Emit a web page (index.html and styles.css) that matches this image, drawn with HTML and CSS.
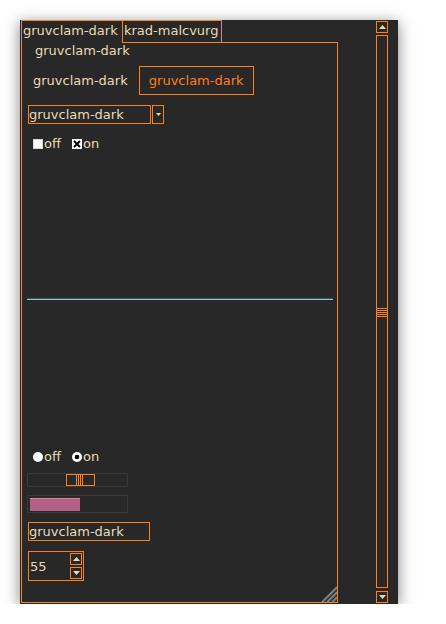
FILE: index.html
```html
<!DOCTYPE html>
<html>
<head>
<meta charset="utf-8">
<link rel="stylesheet" href="styles.css">
</head>
<body>
<div class="page">
  <div class="window">
    <div class="notebook">
      <div class="tabs">
        <div class="tab tab-active">gruvclam-dark</div>
        <div class="tab tab-inactive">krad-malcvurg</div>
        <div class="tab-fill"></div>
      </div>
      <div class="panel">
        <div class="label1">gruvclam-dark</div>
        <div class="row2">
          <span class="lbl">gruvclam-dark</span>
          <div class="btn">gruvclam-dark</div>
        </div>
        <div class="combo">
          <div class="combo-entry">gruvclam-dark</div>
          <div class="combo-btn"><svg width="5" height="3" viewBox="0 0 5 3"><polygon points="0,0 5,0 2.5,3" fill="#ebdbb2"/></svg></div>
        </div>
        <div class="choices">
          <div class="choice"><span class="box"></span><span class="ctext">off</span></div>
          <div class="choice"><svg class="mark" width="10" height="10" viewBox="0 0 10 10"><rect width="10" height="10" fill="#fff"/><path d="M2 2 L8 8 M8 2 L2 8" stroke="#000" stroke-width="2"/></svg><span class="ctext">on</span></div>
        </div>
        <div class="sep"></div>
        <div class="choices radios">
          <div class="choice"><svg class="mark" width="10" height="10" viewBox="0 0 10 10"><circle cx="5" cy="5" r="5" fill="#fff"/></svg><span class="ctext">off</span></div>
          <div class="choice"><svg class="mark" width="10" height="10" viewBox="0 0 10 10"><circle cx="5" cy="5" r="5" fill="#fff"/><circle cx="5" cy="5" r="2.3" fill="#000"/></svg><span class="ctext">on</span></div>
        </div>
        <div class="scale">
          <div class="scale-slider"><div class="scale-grip"></div></div>
        </div>
        <div class="progress"><div class="bar" style="width:50px"></div></div>
        <div class="entry">gruvclam-dark</div>
        <div class="spin">
          <span class="spin-val">55</span>
          <div class="spin-btns">
            <div class="spin-btn"><svg width="7" height="4" viewBox="0 0 7 4"><polygon points="0,4 3.5,0 7,4" fill="#ebdbb2"/></svg></div>
            <div class="spin-btn"><svg width="7" height="4" viewBox="0 0 7 4"><polygon points="0,0 7,0 3.5,4" fill="#ebdbb2"/></svg></div>
          </div>
        </div>
        <svg class="sizegrip" width="16" height="16" viewBox="0 0 16 16">
          <path d="M1 16 L16 1 M6 16 L16 6 M11 16 L16 11" stroke="#8a8a8a" stroke-width="1.6"/>
          <path d="M3 16 L16 3 M8 16 L16 8 M13 16 L16 13" stroke="#555" stroke-width="1"/>
        </svg>
      </div>
    </div>
    <div class="scrollbar">
      <div class="sb-btn"><svg width="7" height="4" viewBox="0 0 7 4"><polygon points="0,4 3.5,0 7,4" fill="#ebdbb2"/></svg></div>
      <div class="sb-trough"><div class="sb-grip"></div></div>
      <div class="sb-btn"><svg width="7" height="4" viewBox="0 0 7 4"><polygon points="0,0 7,0 3.5,4" fill="#ebdbb2"/></svg></div>
    </div>
  </div>
</div>
</body>
</html>
```
FILE: styles.css
```css
* { box-sizing: border-box; }
body {
  margin: 0;
  background: #ffffff;
  font-family: "DejaVu Sans", sans-serif;
  font-size: 13px;
  color: #ebdbb2;
}
.page { padding: 20px 0 0 20px; }
.window {
  width: 378px;
  height: 584px;
  background: #282828;
  display: flex;
  box-shadow: 0 3px 14px rgba(0, 0, 0, 0.5);
}
.notebook {
  margin-left: 1px;
  width: 317px;
  display: flex;
  flex-direction: column;
}
.tabs { display: flex; height: 23px; }
.tab {
  height: 23px;
  line-height: 20px;
  padding: 0 2px 0 1px;
  border-top: 1px solid #fe8019;
  white-space: nowrap;
}
.tab-active { width: 101px; border-left: 1px solid #d3869b; }
.tab-inactive {
  width: 100px;
  border-left: 1px solid #fe8019;
  border-right: 1px solid #d3869b;
  border-bottom: 1px solid #fe8019;
}
.tab-fill { flex: 1; border-bottom: 1px solid #fe8019; }
.panel {
  flex: 1;
  margin-bottom: 1px;
  border: 1px solid #fe8019;
  border-top: none;
  position: relative;
  display: flex;
  flex-direction: column;
  align-items: flex-start;
}
.label1 { margin-left: 13px; line-height: 15px; }
.row2 { margin-top: 8px; margin-left: 11px; display: flex; align-items: center; }
.lbl { margin-right: 11px; line-height: 15px; }
.btn {
  width: 115px;
  height: 29px;
  border: 1px solid #fe8019;
  color: #fe8019;
  display: flex;
  align-items: center;
  justify-content: center;
}
.combo { margin-top: 10px; margin-left: 6px; display: flex; height: 19px; }
.combo-entry { width: 123px; border: 1px solid #fe8019; line-height: 17px; }
.combo-btn {
  width: 12px;
  margin-left: 1px;
  border: 1px solid #fe8019;
  display: flex;
  align-items: center;
  justify-content: center;
}
.choices { margin-top: 12px; margin-left: 11px; display: flex; align-items: center; height: 15px; line-height: 15px; }
.choice { display: flex; align-items: center; }
.choice + .choice { margin-left: 11px; }
.box { width: 10px; height: 10px; background: #fff; border: 1px solid #dcdcdc; }
.mark { display: block; }
.ctext { margin-left: 1px; }
.sep {
  margin-top: 147px;
  margin-left: 5px;
  width: 306px;
  height: 2px;
  border-top: 1px solid #3d5858;
  background: #8cc6c6;
}
.radios { margin-top: 149px; }
.scale {
  margin-top: 9px;
  margin-left: 5px;
  width: 101px;
  height: 14px;
  border: 1px solid #3c3836;
  position: relative;
}
.scale-slider {
  position: absolute;
  left: 38px;
  top: 0;
  width: 29px;
  height: 12px;
  border: 1px solid #fe8019;
}
.scale-grip {
  margin-left: 9px;
  width: 7px;
  height: 100%;
  background: repeating-linear-gradient(90deg, #fe8019 0 1px, transparent 1px 2px);
}
.progress {
  margin-top: 8px;
  margin-left: 5px;
  width: 101px;
  height: 18px;
  border: 1px solid #3c3836;
  padding: 2px 0 1px 2px;
}
.bar { height: 13px; background: #b16286; border-top: 1px solid #d3869b; }
.entry {
  margin-top: 9px;
  margin-left: 6px;
  width: 122px;
  height: 19px;
  border: 1px solid #fe8019;
  line-height: 17px;
}
.spin {
  margin-top: 10px;
  margin-left: 6px;
  width: 56px;
  height: 30px;
  border: 1px solid #fe8019;
  padding-left: 1px;
  display: flex;
  align-items: center;
  justify-content: space-between;
}
.spin-btns { display: flex; flex-direction: column; gap: 2px; margin-right: 1px; }
.spin-btn {
  width: 12px;
  height: 12px;
  border: 1px solid #fe8019;
  display: flex;
  align-items: center;
  justify-content: center;
}
.sizegrip { position: absolute; right: 0; bottom: 0; }
.scrollbar {
  margin-left: 38px;
  width: 12px;
  padding: 1px 0;
  display: flex;
  flex-direction: column;
}
.sb-btn {
  height: 12px;
  border: 1px solid #fe8019;
  display: flex;
  align-items: center;
  justify-content: center;
}
.sb-trough {
  flex: 1;
  margin: 2px 0 3px;
  border: 1px solid #fe8019;
  position: relative;
}
.sb-grip {
  position: absolute;
  left: 0;
  right: 0;
  top: 272px;
  height: 9px;
  background: repeating-linear-gradient(180deg, #fe8019 0 1px, transparent 1px 2px);
}
```
